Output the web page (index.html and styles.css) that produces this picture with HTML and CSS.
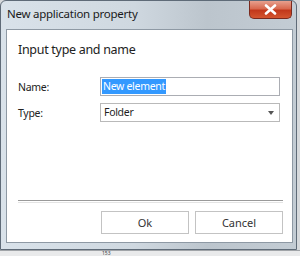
FILE: index.html
```html
<!DOCTYPE html>
<html>
<head>
<meta charset="utf-8">
<link rel="stylesheet" href="styles.css">
</head>
<body>
<div class="screen">
  <div class="window">
    <div class="titlebar">
      <span class="title">New application property</span>
      <div class="close">
        <svg width="13" height="11" viewBox="0 0 13 11"><path d="M2 1.5 L11 9.5 M11 1.5 L2 9.5" stroke="#fff" stroke-width="2.6" stroke-linecap="round"/></svg>
      </div>
    </div>
    <div class="client">
      <div class="heading">Input type and name</div>
      <div class="form">
        <label class="label">Name:</label>
        <div class="field"><span class="sel">New element</span></div>
        <label class="label">Type:</label>
        <div class="field select"><span>Folder</span><span class="arrow"></span></div>
      </div>
      <div class="spacer"></div>
      <div class="sep"></div>
      <div class="buttons">
        <div class="btn">Ok</div>
        <div class="btn">Cancel</div>
      </div>
    </div>
  </div>
  <div class="behind">
    <span class="cell">153</span>
  </div>
</div>
</body>
</html>
```
FILE: styles.css
```css
html, body {
  margin: 0;
  padding: 0;
}
body {
  width: 300px;
  height: 256px;
  overflow: hidden;
  background: #d6d9dc;
  font-family: "Noto Sans", "Open Sans", sans-serif;
  color: #1e1e1e;
}
.screen {
  display: flex;
  flex-direction: column;
}
.window {
  width: 297px;
  height: 250px;
  box-sizing: border-box;
  border: 1px solid #5f6b78;
  border-radius: 6px 6px 0 0;
  background: linear-gradient(90deg, #d9e2ea 0%, #cfd8e0 45%, #bcc5cd 70%, #c3ccd4 100%);
  display: flex;
  flex-direction: column;
  padding: 0 3px 6px 5px;
}
.titlebar {
  height: 28px;
  display: flex;
  align-items: flex-start;
}
.title {
  font-size: 11.5px;
  line-height: 14px;
  padding-top: 6px;
  padding-left: 1px;
  color: #1a1a1a;
  letter-spacing: -0.25px;
}
.close {
  margin-left: auto;
  margin-right: 1px;
  width: 43px;
  height: 18px;
  box-sizing: border-box;
  border: 1px solid #7a2a1e;
  border-top: none;
  border-radius: 0 0 5px 5px;
  background: linear-gradient(180deg, #e7a08e 0%, #d8694f 45%, #c2381b 55%, #d4552f 100%);
  display: flex;
  align-items: center;
  justify-content: center;
}
.client {
  flex: 1;
  background: #fff;
  border: 1px solid #8e99a4;
  padding: 11px 9px 8px 11px;
  display: flex;
  flex-direction: column;
}
.heading {
  font-size: 12.5px;
  line-height: 18px;
  color: #222;
  letter-spacing: -0.3px;
}
.form {
  margin-top: 18px;
  display: grid;
  grid-template-columns: 82px 180px;
  row-gap: 7px;
  align-items: center;
  font-size: 10.5px;
  letter-spacing: -0.3px;
}
.label {
  color: #222;
}
.field {
  height: 19px;
  box-sizing: border-box;
  border: 1px solid #abadb3;
  padding: 0 1px;
  display: flex;
  align-items: center;
  line-height: 15px;
}
.sel {
  background: #3399ff;
  color: #fff;
  padding: 0 1px;
}
.select {
  justify-content: space-between;
  padding: 0 5px 0 3px;
  border-color: #b9b9b9;
}
.arrow {
  width: 0;
  height: 0;
  border-left: 3px solid transparent;
  border-right: 3px solid transparent;
  border-top: 4px solid #555;
}
.spacer {
  flex: 1;
}
.sep {
  height: 1px;
  border-top: 1px solid #9a9a9a;
  border-bottom: 1px solid #e4e4e4;
  margin-bottom: 8px;
}
.buttons {
  display: flex;
  justify-content: flex-end;
  gap: 6px;
}
.btn {
  width: 88px;
  height: 23px;
  box-sizing: border-box;
  border: 1px solid #c3c3c3;
  background: #fff;
  font-size: 11px;
  display: flex;
  align-items: center;
  justify-content: center;
  color: #333;
}
.behind {
  height: 5px;
  overflow: hidden;
  background: #e9eaeb;
  border-top: 1px solid #a0a4a8;
  font-size: 5px;
  line-height: 5px;
  padding-left: 102px;
  color: #444;
}
.cell {
  display: inline-block;
}
```
